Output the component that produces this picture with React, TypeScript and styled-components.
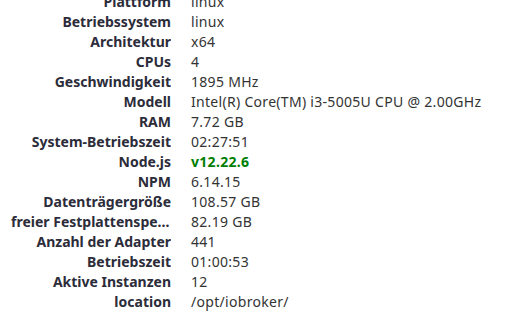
import React from "react";
import styled, { createGlobalStyle } from "styled-components";

const Global = createGlobalStyle`
  html, body {
    margin: 0;
    padding: 0;
    background: #fff;
    overflow: hidden;
  }
  body {
    font-family: "Noto Sans", "Open Sans", sans-serif;
    font-size: 14px;
    color: #333;
  }
`;

const Table = styled.div`
  display: grid;
  grid-template-columns: 171px 1fr;
  column-gap: 20px;
  margin-top: -8px;
`;

const Label = styled.div`
  font-weight: bold;
  text-align: right;
  line-height: 20px;
  padding-left: 11px;
  color: #2c2c3a;
  white-space: nowrap;
  overflow: hidden;
  text-overflow: ellipsis;
`;

const Value = styled.div<{ $green?: boolean }>`
  line-height: 20px;
  white-space: nowrap;
  color: ${(p) => (p.$green ? "#008000" : "#333")};
  font-weight: ${(p) => (p.$green ? "bold" : "normal")};
  letter-spacing: 0.3px;
`;

const rows: [string, string, boolean?][] = [
  ["Plattform", "linux"],
  ["Betriebssystem", "linux"],
  ["Architektur", "x64"],
  ["CPUs", "4"],
  ["Geschwindigkeit", "1895 MHz"],
  ["Modell", "Intel(R) Core(TM) i3-5005U CPU @ 2.00GHz"],
  ["RAM", "7.72 GB"],
  ["System-Betriebszeit", "02:27:51"],
  ["Node.js", "v12.22.6", true],
  ["NPM", "6.14.15"],
  ["Datenträgergröße", "108.57 GB"],
  ["freier Festplattenspeicher", "82.19 GB"],
  ["Anzahl der Adapter", "441"],
  ["Betriebszeit", "01:00:53"],
  ["Aktive Instanzen", "12"],
  ["location", "/opt/iobroker/"],
];

export default function App() {
  return (
    <>
      <Global />
      <Table>
        {rows.map(([k, v, g]) => (
          <React.Fragment key={k}>
            <Label>{k}</Label>
            <Value $green={g}>{v}</Value>
          </React.Fragment>
        ))}
      </Table>
    </>
  );
}
